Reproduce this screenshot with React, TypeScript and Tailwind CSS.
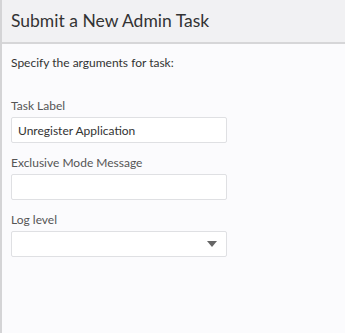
export default function App() {
  return (
    <div
      className="h-[333px] w-[345px] border-l-2 border-[#d4d4d6] bg-[#fbfbfd] text-[#333]"
      style={{ fontFamily: 'Lato, "Open Sans", sans-serif' }}
    >
      <div className="flex h-[44px] items-center border-b-2 border-[#d6d6d8] bg-[#f1f1f3] pl-[9px]">
        <h1 className="text-[17.5px] font-normal text-[#333]">Submit a New Admin Task</h1>
      </div>
      <div className="px-[9px] pt-[11px]">
        <p className="text-[12px] leading-[16px] text-[#333]">Specify the arguments for task:</p>

        <div className="mt-[27px] flex flex-col">
          <label className="text-[12px] text-[#555] leading-[16px]">Task Label</label>
          <input
            readOnly
            value="Unregister Application"
            className="mt-[3px] h-[26px] w-[216px] rounded-[2px] border border-[#dfe0e3] bg-white px-[6px] text-[12px] text-[#333] outline-none"
          />
        </div>

        <div className="mt-[12px] flex flex-col">
          <label className="text-[12px] text-[#555] leading-[16px]">Exclusive Mode Message</label>
          <input
            readOnly
            className="mt-[3px] h-[26px] w-[216px] rounded-[2px] border border-[#dfe0e3] bg-white px-[6px] text-[12px] outline-none"
          />
        </div>

        <div className="mt-[12px] flex flex-col">
          <label className="text-[12px] text-[#555] leading-[16px]">Log level</label>
          <div className="mt-[3px] flex h-[26px] w-[216px] items-center justify-end rounded-[2px] border border-[#dfe0e3] bg-white pr-[9px]">
            <svg width="10" height="6" viewBox="0 0 10 6">
              <path d="M0 0 L10 0 L5 6 Z" fill="#666" />
            </svg>
          </div>
        </div>
      </div>
    </div>
  );
}
